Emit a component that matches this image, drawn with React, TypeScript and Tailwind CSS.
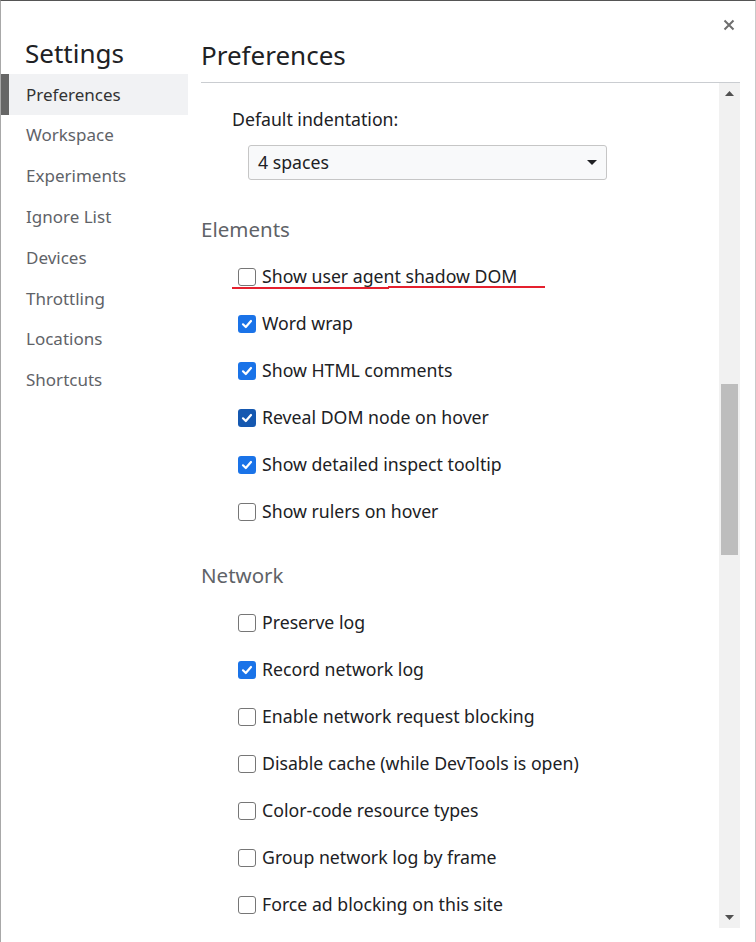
import React from "react";

const font = { fontFamily: '"Noto Sans", "Open Sans", sans-serif' };

function Check({ checked, dark }: { checked: boolean; dark?: boolean }) {
  if (!checked) {
    return (
      <span className="w-[18px] h-[18px] rounded-[3px] border-[1.5px] border-[#767676] bg-white shrink-0" />
    );
  }
  return (
    <span
      className={
        "w-[18px] h-[18px] rounded-[3px] shrink-0 flex items-center justify-center " +
        (dark ? "bg-[#1558b0]" : "bg-[#1a73e8]")
      }
    >
      <svg width="12" height="12" viewBox="0 0 12 12">
        <path d="M2 6.3 L4.8 9 L10 3" fill="none" stroke="white" strokeWidth="2.2" strokeLinecap="round" strokeLinejoin="round" />
      </svg>
    </span>
  );
}

function Item({ label, checked, dark, children }: { label: string; checked?: boolean; dark?: boolean; children?: React.ReactNode }) {
  return (
    <div className="relative h-[47px] flex items-center pl-[37px] gap-[6px]">
      <Check checked={!!checked} dark={dark} />
      <span className="text-[17.7px] text-[#202124] whitespace-nowrap">{label}</span>
      {children}
    </div>
  );
}

const nav = ["Preferences", "Workspace", "Experiments", "Ignore List", "Devices", "Throttling", "Locations", "Shortcuts"];

export default function App() {
  return (
    <div style={font} className="relative w-[756px] h-[942px] bg-white border-t border-t-[#555] border-l border-l-[#a8a8a8] border-r border-r-[#c8c8c8] flex overflow-hidden">
      {/* Sidebar */}
      <div className="w-[187px] shrink-0 flex flex-col">
        <div className="h-[73px] pl-[24px] pt-[33px] text-[26px] leading-[38px] text-[#202124]">Settings</div>
        {nav.map((n, i) => (
          <div
            key={n}
            className={
              "h-[40.8px] flex items-center pl-[17px] border-l-[8px] text-[17px] " +
              (i === 0 ? "border-l-[#666] bg-[#f1f2f4] text-[#333]" : "border-l-transparent text-[#5f6368]")
            }
          >
            {n}
          </div>
        ))}
      </div>
      {/* Main */}
      <div className="flex-1 flex flex-col pl-[13px]">
        <div className="h-[82px] flex">
          <div className="flex-1 border-b border-b-[#cacdd1] pt-[35px] text-[26px] leading-[38px] text-[#202124]">Preferences</div>
          <div className="w-[15px]" />
        </div>
        <div className="flex h-[845px] pr-[15px]">
          <div className="flex-1 overflow-hidden">
            <div className="mt-[-34px]">
              <Item label="Display variable values inline while debugging" checked />
              <div className="h-[47px] flex items-center pl-[31px] text-[17.7px] text-[#202124]">Default indentation:</div>
              <div className="ml-[47px] mt-[2px] w-[359px] h-[35px] rounded-[3px] border border-[#c6c6c6] bg-[#f8f9fa] flex items-center pl-[9px] pr-[9px] justify-between">
                <span className="text-[17.7px] text-[#202124]">4 spaces</span>
                <svg width="10" height="6" viewBox="0 0 10 6"><path d="M0 0 L10 0 L5 5 Z" fill="#202124" /></svg>
              </div>
              <div className="mt-[26px] h-[47px] flex items-center text-[20.5px] text-[#5f6368]">Elements</div>
              <Item label="Show user agent shadow DOM">
                <span className="absolute left-[31px] top-[34px] w-[157px] h-[2px] bg-[#e5202e]" />
                <span className="absolute left-[187px] top-[33px] w-[157px] h-[2px] bg-[#e5202e]" />
              </Item>
              <Item label="Word wrap" checked />
              <Item label="Show HTML comments" checked />
              <Item label="Reveal DOM node on hover" checked dark />
              <Item label="Show detailed inspect tooltip" checked />
              <Item label="Show rulers on hover" />
              <div className="mt-[17px] h-[47px] flex items-center text-[20.5px] text-[#5f6368]">Network</div>
              <Item label="Preserve log" />
              <Item label="Record network log" checked />
              <Item label="Enable network request blocking" />
              <Item label="Disable cache (while DevTools is open)" />
              <Item label="Color-code resource types" />
              <Item label="Group network log by frame" />
              <Item label="Force ad blocking on this site" />
            </div>
          </div>
          {/* scrollbar */}
          <div className="w-[21px] bg-[#f1f1f1] flex flex-col">
            <div className="h-[21px] flex items-center justify-center">
              <svg width="9" height="5" viewBox="0 0 9 5"><path d="M0 5 L9 5 L4.5 0 Z" fill="#505050" /></svg>
            </div>
            <div className="h-[280px]" />
            <div className="mx-[2px] h-[171px] bg-[#bdbdbd]" />
            <div className="flex-1" />
            <div className="h-[21px] flex items-center justify-center">
              <svg width="9" height="5" viewBox="0 0 9 5"><path d="M0 0 L9 0 L4.5 5 Z" fill="#505050" /></svg>
            </div>
          </div>
        </div>
      </div>
      {/* close */}
      <div className="absolute left-[722px] top-[18px]">
        <svg width="12" height="12" viewBox="0 0 12 12">
          <path d="M1.5 1.5 L10.5 10.5 M10.5 1.5 L1.5 10.5" stroke="#6e6e6e" strokeWidth="2" />
        </svg>
      </div>
    </div>
  );
}
